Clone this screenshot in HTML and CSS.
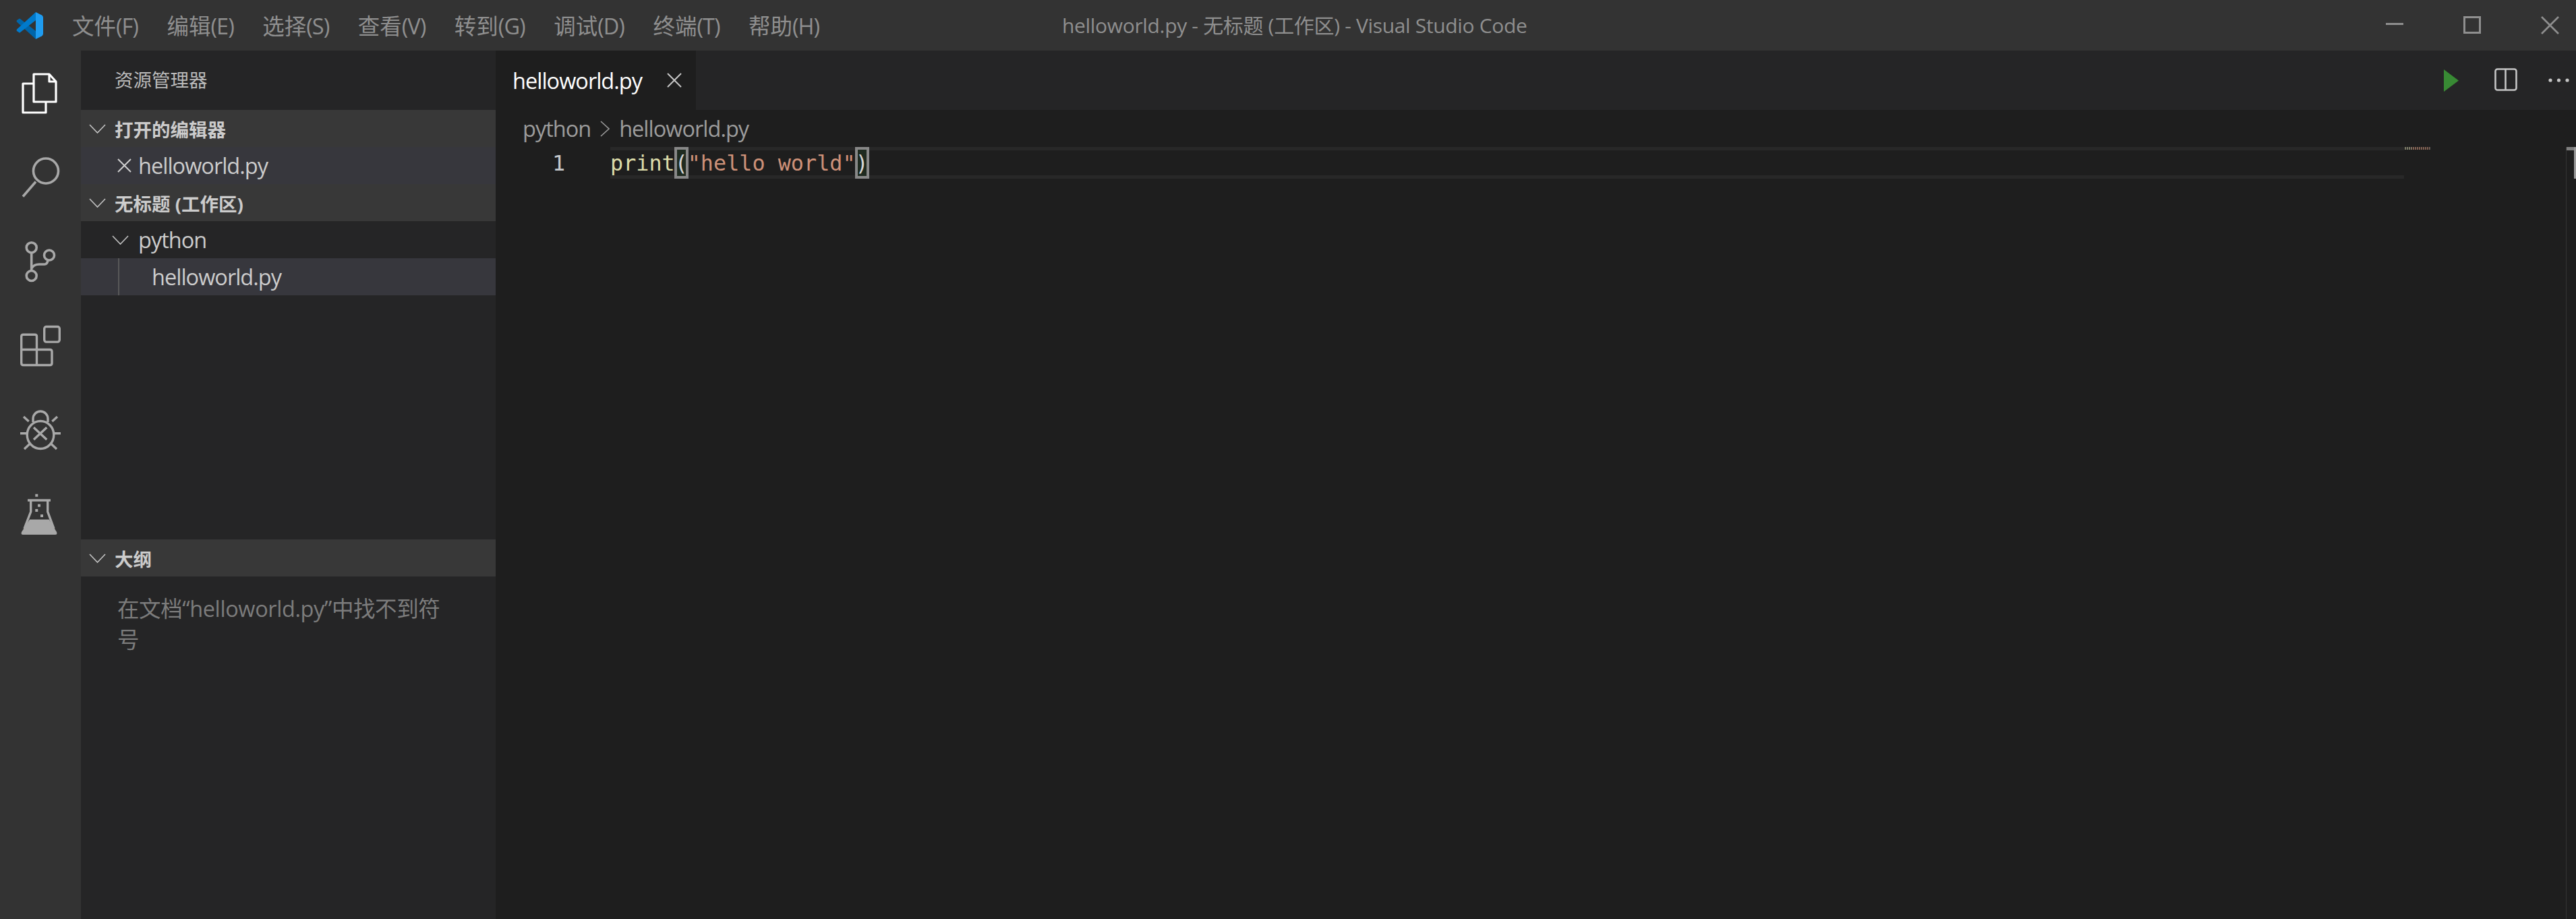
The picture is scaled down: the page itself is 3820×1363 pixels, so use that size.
FILE: index.html
```html
<!DOCTYPE html>
<html lang="zh-CN">
<head>
<meta charset="utf-8">
<title>helloworld.py - 无标题 (工作区) - Visual Studio Code</title>
<link rel="stylesheet" href="styles.css">
</head>
<body>
<div class="app">
  <header class="titlebar">
    <div class="logo">
      <svg width="40" height="40" viewBox="0 0 40 40"><path fill="#0065a9" d="M29 40 1 14.500Q0 13 1 12L4 10Q5 9 6 10L29 28Z"/><path fill="#007acc" d="M29 0 1 25.500Q0 27 1 28L4 30Q5 31 6 30L29 12Z"/><path fill="#1f9cf0" d="M29 0 38 4.500Q40 5.500 40 8V32Q40 34.500 38 35.500L29 40Z"/></svg>
    </div>
    <nav class="menu">
      <span class="menu-item">文件<span class="latin">(F)</span></span>
      <span class="menu-item">编辑<span class="latin">(E)</span></span>
      <span class="menu-item">选择<span class="latin">(S)</span></span>
      <span class="menu-item">查看<span class="latin">(V)</span></span>
      <span class="menu-item">转到<span class="latin">(G)</span></span>
      <span class="menu-item">调试<span class="latin">(D)</span></span>
      <span class="menu-item">终端<span class="latin">(T)</span></span>
      <span class="menu-item">帮助<span class="latin">(H)</span></span>
    </nav>
    <div class="window-title">helloworld.py - 无标题 (工作区) - Visual Studio Code</div>
    <div class="window-controls">
      <svg class="win-btn" width="27" height="27" viewBox="0 0 27 27"><path d="M0 11.500H26" stroke="#8f8f8f" stroke-width="3" fill="none"/></svg>
      <svg class="win-btn" width="27" height="27" viewBox="0 0 27 27"><rect x="1.500" y="1.500" width="23" height="23" stroke="#8f8f8f" stroke-width="3" fill="none"/></svg>
      <svg class="win-btn" width="27" height="27" viewBox="0 0 27 27"><path d="M1 1 26 26M26 1 1 26" stroke="#8f8f8f" stroke-width="2.600" fill="none"/></svg>
    </div>
  </header>
  <div class="workbench">
    <aside class="activity">
      <div class="act"><svg width="60" height="62" viewBox="0 0 60 62" fill="none" stroke="#fff" stroke-width="3.200" stroke-linejoin="round"><path d="M20 17H4V60H38V44"/><path d="M20 3H43L53 14V44H20Z"/><path d="M43 3V14H53"/></svg></div>
      <div class="act"><svg width="60" height="62" viewBox="0 0 60 62" fill="none" stroke="#a8a8a8" stroke-width="3.600"><circle cx="38" cy="21.500" r="18.500"/><path d="M23 37.500 4 59.500"/></svg></div>
      <div class="act"><svg width="60" height="62" viewBox="0 0 60 62" fill="none" stroke="#a8a8a8" stroke-width="3.600"><circle cx="16.700" cy="10.200" r="7.500"/><circle cx="16.700" cy="52" r="7.500"/><circle cx="43" cy="21.500" r="7.500"/><path d="M16.700 17.700V44.500M17 41Q20 35 28 35H36Q40 35 41 29"/></svg></div>
      <div class="act"><svg width="60" height="62" viewBox="0 0 60 62" fill="none" stroke="#a8a8a8" stroke-width="3.400"><rect x="35.700" y="2.500" width="22.600" height="22.600" rx="3"/><path d="M1.700 17Q1.700 14.200 4.500 14.200H21.700Q24.500 14.200 24.500 17V36.500H44Q47 36.500 47 39.500V56.500Q47 59.500 44 59.500H4.700Q1.700 59.500 1.700 56.500ZM1.700 36.500H24.500V59.500"/></svg></div>
      <div class="act"><svg width="60" height="62" viewBox="0 0 60 62" fill="none" stroke="#a8a8a8" stroke-width="3.400"><ellipse cx="30" cy="38" rx="19.800" ry="20.500"/><path d="M19 19V14A11 11 0 0 1 41 14V19M5 11 12.700 18M55 11 47.300 18M0 35.800H9.300M51 35.800H60M6 59 15 50.500M54 59 45 50.500M20 27 39.300 45M39.300 27 20 45"/></svg></div>
      <div class="act"><svg width="60" height="62" viewBox="0 0 60 62" fill="none" stroke="#a8a8a8" stroke-width="3.400"><path d="M11 10H45M15.700 10V27L6 52M40.700 10V27L50 52"/><path class="flask-fill" d="M14 38.500H42.700L54 57Q55.500 61 52 61H4Q.5 61 2 57Z"/><path class="flask-fill" d="M22.300 .8h4v4h-4zM26 15.800h4v4h-4zM22.300 23h4v4h-4zM30 31h4v4h-4z"/></svg></div>
    </aside>
    <aside class="sidebar">
      <div class="side-title">资源管理器</div>
      <div class="section-head"><svg class="chev" width="25" height="14" viewBox="0 0 25 14"><path d="M1 1 12.500 13 24 1" fill="none" stroke="#c5c5c5" stroke-width="1.600"/></svg><span>打开的编辑器</span></div>
      <div class="row row-open"><svg class="x" width="21" height="21" viewBox="0 0 21 21"><path d="M1 1 20 20M20 1 1 20" stroke="#cfcfcf" stroke-width="2" fill="none"/></svg><span class="latin">helloworld.py</span></div>
      <div class="section-head"><svg class="chev" width="25" height="14" viewBox="0 0 25 14"><path d="M1 1 12.500 13 24 1" fill="none" stroke="#c5c5c5" stroke-width="1.600"/></svg><span>无标题 (工作区)</span></div>
      <div class="row row-folder"><svg class="chev" width="25" height="14" viewBox="0 0 25 14"><path d="M1 1 12.500 13 24 1" fill="none" stroke="#c5c5c5" stroke-width="1.600"/></svg><span class="latin">python</span></div>
      <div class="row row-file"><span class="guide"></span><span class="latin">helloworld.py</span></div>
      <div class="side-spacer"></div>
      <div class="section-head"><svg class="chev" width="25" height="14" viewBox="0 0 25 14"><path d="M1 1 12.500 13 24 1" fill="none" stroke="#c5c5c5" stroke-width="1.600"/></svg><span>大纲</span></div>
      <div class="outline-msg">在文档“helloworld.py”中找不到符号</div>
    </aside>
    <main class="editor-area">
      <div class="tabbar">
        <div class="tab"><span class="latin">helloworld.py</span><svg width="22" height="22" viewBox="0 0 22 22"><path d="M1 1 21 21M21 1 1 21" stroke="#c8c8c8" stroke-width="2" fill="none"/></svg></div>
        <div class="actions">
          <svg class="play" width="22" height="33" viewBox="0 0 22 33"><path d="M0 0 22 16.500 0 33Z" fill="#388a34"/></svg>
          <svg class="split" width="34" height="34" viewBox="0 0 34 34" fill="none" stroke="#c5c5c5" stroke-width="2.600"><rect x="1.500" y="1.500" width="31" height="31" rx="3"/><path d="M16.500 1V33"/></svg>
          <svg class="dots" width="32" height="6" viewBox="0 0 32 6"><circle cx="3" cy="3" r="2.600" fill="#c5c5c5"/><circle cx="15.500" cy="3" r="2.600" fill="#c5c5c5"/><circle cx="28" cy="3" r="2.600" fill="#c5c5c5"/></svg>
        </div>
      </div>
      <div class="breadcrumbs"><span class="latin">python</span><svg width="14" height="24" viewBox="0 0 14 24"><path d="M1 1 13 12 1 23" fill="none" stroke="#9a9a9a" stroke-width="1.600"/></svg><span class="latin">helloworld.py</span></div>
      <div class="code-wrap">
        <div class="gutter">1</div>
        <div class="code-line"><span class="fn">print</span><span class="br">(</span><span class="str">"hello world"</span><span class="br">)</span></div>
        <div class="minimap"><span class="mini-code"></span></div>
        <div class="scroll-edge"><span class="band"></span><span class="thumb"></span></div>
      </div>
    </main>
  </div>
</div>
</body>
</html>
```

FILE: styles.css
```css
* { box-sizing: border-box; }
html, body { margin: 0; height: 100%; background: #1e1e1e; overflow: hidden; }
body { font-family: "Open Sans", "Noto Sans CJK SC", sans-serif; font-size: 32.5px; color: #ccc; }
.latin { letter-spacing: -1px; }
.app { display: flex; flex-direction: column; width: 3820px; height: 1363px; }
.titlebar { flex: 0 0 75px; background: #333; display: flex; align-items: center; position: relative; color: #8f8f8f; }
.logo { width: 107px; padding-left: 24px; display: flex; align-items: center; }
.menu { display: flex; gap: 42.5px; margin-top: -1px; }
.menu-item { white-space: nowrap; }
.window-title { position: absolute; left: 1575px; top: 0; line-height: 75px; font-size: 30px; letter-spacing: -.33px; white-space: nowrap; }
.window-controls { margin-left: auto; display: flex; gap: 88px; padding-right: 25px; align-items: center; }
.win-btn { display: block; }
.workbench { flex: 1; display: flex; min-height: 0; }
.activity { flex: 0 0 120px; background: #333; display: flex; flex-direction: column; }
.act { flex: 0 0 125px; display: flex; align-items: center; justify-content: center; }
.flask-fill { fill: #a8a8a8; stroke: none; }
.sidebar { flex: 0 0 615px; background: #252526; display: flex; flex-direction: column; }
.side-title { flex: 0 0 88px; line-height: 88px; padding-left: 50px; font-size: 27.5px; color: #bbb; }
.section-head { flex: 0 0 55px; background: #383838; display: flex; align-items: center; padding-left: 12px; gap: 13px; font-weight: 700; font-size: 27.5px; color: #ccc; }
.chev { display: block; flex: none; }
.row { flex: 0 0 55px; display: flex; align-items: center; position: relative; }
.row-open { background: #37373d; padding-left: 54px; gap: 10px; }
.row-folder { padding-left: 46px; gap: 14px; }
.row-file { background: #37373d; padding-left: 105px; }
.guide { position: absolute; left: 55px; top: 0; bottom: 0; width: 2px; background: #585858; }
.side-spacer { flex: 0 0 362px; }
.outline-msg { padding: 25px 60px 0 54px; line-height: 46px; letter-spacing: -.4px; color: #7c7c7c; }
.editor-area { flex: 1; min-width: 0; display: flex; flex-direction: column; background: #1e1e1e; }
.tabbar { flex: 0 0 88px; background: #252526; display: flex; align-items: center; }
.tab { width: 297px; height: 88px; background: #1e1e1e; color: #fff; display: flex; align-items: center; padding-left: 25px; gap: 37px; }
.actions { margin-left: auto; display: flex; align-items: center; padding-right: 9px; gap: 46px; }
.play { margin-right: 7px; }
.split { margin-top: -3px; }
.breadcrumbs { flex: 0 0 55px; display: flex; align-items: center; padding-left: 40px; gap: 14px; color: #9c9c9c; }
.code-wrap { flex: 1; position: relative; }
.gutter { position: absolute; left: 84px; top: 0; height: 47px; padding-top: 5px; line-height: 37px; font-family: "DejaVu Sans Mono", monospace; font-size: 31.8px; color: #c6c9cc; }
.code-line { position: absolute; left: 170px; right: 255px; top: 0; height: 47px; display: flex; line-height: 37px; font-family: "DejaVu Sans Mono", monospace; font-size: 31.8px; border-top: 5px solid #282828; border-bottom: 5px solid #282828; white-space: pre; }
.fn { color: #dcdcaa; }
.br { width: 21px; height: 47px; margin: -5px -1px; border: 4px solid #888; background: #1f2b20; color: #d4d4d4; line-height: 39px; text-indent: -3px; }
.str { color: #ce9178; }
.minimap { position: absolute; left: 2830px; top: 0; width: 40px; height: 4px; opacity: .7; }
.mini-code { display: block; height: 4px; background: repeating-linear-gradient(90deg, #1e1e1e 0 1px, transparent 1px 3px), linear-gradient(90deg, #a5a58a 0 11px, #a87c68 11px 38px, #777 38px); }
.scroll-edge { position: absolute; right: 0; top: 0; bottom: 0; width: 15px; border-left: 1px solid #333; }
.band { position: absolute; left: 0; right: 3px; top: 0; height: 5px; background: #7f7f7f; }
.thumb { position: absolute; right: 0; top: 0; width: 3px; height: 47px; background: #9a9a9a; }
```
